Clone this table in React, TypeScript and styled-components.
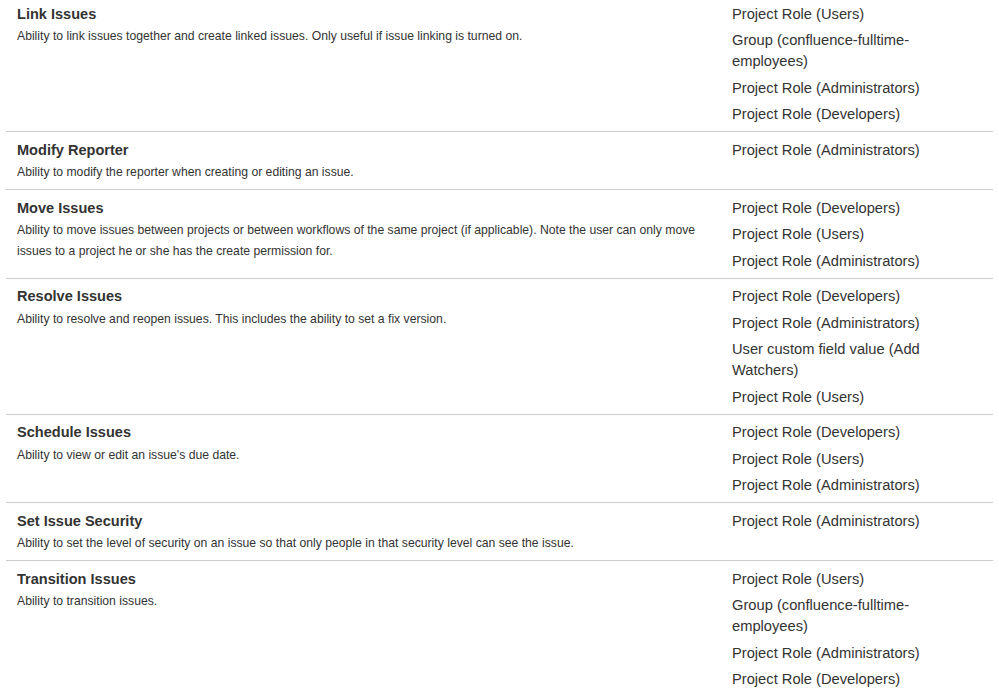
import React from "react";
import styled, { createGlobalStyle } from "styled-components";

const GlobalStyle = createGlobalStyle`
  html, body {
    margin: 0;
    padding: 0;
    background: #ffffff;
    overflow: hidden;
  }
  body {
    font-family: "Liberation Sans", Arial, Helvetica, sans-serif;
    color: #333333;
  }
`;

const Viewport = styled.div`
  width: 999px;
  height: 696px;
  overflow: hidden;
`;

const Table = styled.div`
  margin: -4px 0 0 6px;
  width: 987px;
  display: flex;
  flex-direction: column;
`;

const Row = styled.div<{ $first?: boolean }>`
  display: grid;
  grid-template-columns: 716px 1fr;
  border-top: ${(p) => (p.$first ? "none" : "1px solid #cccccc")};
`;

const InfoCell = styled.div`
  padding: 7.5px 10px 6px 11px;
  display: flex;
  flex-direction: column;
`;

const Title = styled.div`
  font-size: 14.56px;
  font-weight: bold;
  line-height: 21px;
  margin-bottom: 1.5px;
  color: #333333;
`;

const Description = styled.div`
  font-size: 12.2px;
  line-height: 21px;
  color: #333333;
`;

const GrantList = styled.ul`
  list-style: none;
  margin: 0;
  padding: 7.5px 31px 6px 10px;
  display: flex;
  flex-direction: column;
  gap: 5.5px;
`;

const Grant = styled.li`
  font-size: 14.7px;
  line-height: 21px;
  color: #333333;
`;

type Permission = {
  name: string;
  description: string;
  grants: string[];
};

const permissions: Permission[] = [
  {
    name: "Link Issues",
    description:
      "Ability to link issues together and create linked issues. Only useful if issue linking is turned on.",
    grants: [
      "Project Role (Users)",
      "Group (confluence-fulltime-employees)",
      "Project Role (Administrators)",
      "Project Role (Developers)",
    ],
  },
  {
    name: "Modify Reporter",
    description: "Ability to modify the reporter when creating or editing an issue.",
    grants: ["Project Role (Administrators)"],
  },
  {
    name: "Move Issues",
    description:
      "Ability to move issues between projects or between workflows of the same project (if applicable). Note the user can only move issues to a project he or she has the create permission for.",
    grants: [
      "Project Role (Developers)",
      "Project Role (Users)",
      "Project Role (Administrators)",
    ],
  },
  {
    name: "Resolve Issues",
    description:
      "Ability to resolve and reopen issues. This includes the ability to set a fix version.",
    grants: [
      "Project Role (Developers)",
      "Project Role (Administrators)",
      "User custom field value (Add Watchers)",
      "Project Role (Users)",
    ],
  },
  {
    name: "Schedule Issues",
    description: "Ability to view or edit an issue's due date.",
    grants: [
      "Project Role (Developers)",
      "Project Role (Users)",
      "Project Role (Administrators)",
    ],
  },
  {
    name: "Set Issue Security",
    description:
      "Ability to set the level of security on an issue so that only people in that security level can see the issue.",
    grants: ["Project Role (Administrators)"],
  },
  {
    name: "Transition Issues",
    description: "Ability to transition issues.",
    grants: [
      "Project Role (Users)",
      "Group (confluence-fulltime-employees)",
      "Project Role (Administrators)",
      "Project Role (Developers)",
    ],
  },
];

export default function App() {
  return (
    <>
      <GlobalStyle />
      <Viewport>
        <Table>
          {permissions.map((p, i) => (
            <Row key={p.name} $first={i === 0}>
              <InfoCell>
                <Title>{p.name}</Title>
                <Description>{p.description}</Description>
              </InfoCell>
              <GrantList>
                {p.grants.map((g) => (
                  <Grant key={g}>{g}</Grant>
                ))}
              </GrantList>
            </Row>
          ))}
        </Table>
      </Viewport>
    </>
  );
}
